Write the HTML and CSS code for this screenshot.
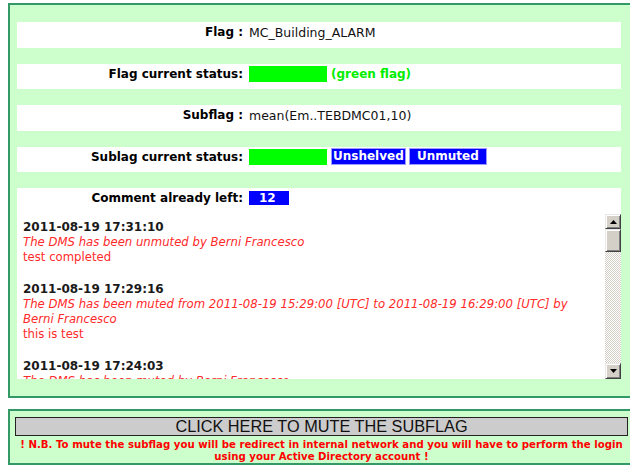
FILE: index.html
```html
<!DOCTYPE html>
<html>
<head>
<meta charset="utf-8">
<title>Subflag details</title>
<link rel="stylesheet" href="styles.css">
</head>
<body>
<div class="panel info">
  <div class="row">
    <div class="label">Flag :</div>
    <div class="value">MC_Building_ALARM</div>
  </div>
  <div class="row">
    <div class="label">Flag current status:</div>
    <div class="value"><span class="lamp"></span><span class="flag-text">(green flag)</span></div>
  </div>
  <div class="row">
    <div class="label">Subflag :</div>
    <div class="value">mean(Em..TEBDMC01,10)</div>
  </div>
  <div class="row">
    <div class="label">Sublag current status:</div>
    <div class="value"><span class="lamp"></span><span class="tag shelve">Unshelved</span><span class="tag mute">Unmuted</span></div>
  </div>
  <div class="comments">
    <div class="comments-head">
      <div class="label">Comment already left:</div>
      <div class="value"><span class="tag count">12</span></div>
    </div>
    <div class="log">
      <div class="log-body">
        <div class="entry">
          <div class="stamp">2011-08-19 17:31:10</div>
          <div class="event">The DMS has been unmuted by Berni Francesco</div>
          <div class="note">test completed</div>
        </div>
        <div class="entry">
          <div class="stamp">2011-08-19 17:29:16</div>
          <div class="event">The DMS has been muted from 2011-08-19 15:29:00 [UTC] to 2011-08-19 16:29:00 [UTC] by Berni Francesco</div>
          <div class="note">this is test</div>
        </div>
        <div class="entry">
          <div class="stamp">2011-08-19 17:24:03</div>
          <div class="event">The DMS has been muted by Berni Francesco</div>
          <div class="note">test</div>
        </div>
      </div>
      <div class="scrollbar">
        <div class="sb-btn sb-up"><svg width="7" height="4" viewBox="0 0 7 4"><polygon points="3.5,0 7,4 0,4"/></svg></div>
        <div class="sb-btn sb-thumb"></div>
        <div class="sb-track"></div>
        <div class="sb-btn sb-down"><svg width="7" height="4" viewBox="0 0 7 4"><polygon points="0,0 7,0 3.5,4"/></svg></div>
      </div>
    </div>
  </div>
</div>
<div class="panel action">
  <button class="mute-btn" type="button">CLICK HERE TO MUTE THE SUBFLAG</button>
  <p class="warning">! N.B. To mute the subflag you will be redirect in internal network and you will have to perform the login using your Active Directory account !</p>
</div>
</body>
</html>
```

FILE: styles.css
```css
html {
  overflow: hidden;
}

body {
  margin: 3px 0 0 8px;
  background: #ffffff;
  font-family: "DejaVu Sans", Verdana, sans-serif;
  color: #000;
}

/* green framed panels */
.panel {
  width: 627px;
  box-sizing: border-box;
  border: 2px solid #339966;
  background: #ccffcc;
}

.info {
  display: flex;
  flex-direction: column;
  gap: 16px;
  padding: 17px 12px 17px 7px;
}

.row {
  width: 604px;
  height: 25.5px;
  box-sizing: border-box;
  padding-top: 2px;
  display: flex;
  align-items: flex-start;
  background: #ffffff;
}

.label {
  width: 226px;
  flex: none;
  text-align: right;
  font-weight: bold;
  font-size: 12px;
  line-height: 16px;
  color: #000;
  white-space: nowrap;
}

.value {
  margin-left: 6px;
  height: 16px;
  display: flex;
  align-items: center;
  font-size: 12.5px;
  color: #111;
  white-space: nowrap;
}

.lamp {
  width: 78px;
  height: 16px;
  background: #00ff00;
  flex: none;
}

.flag-text {
  margin-left: 4px;
  font-weight: bold;
  font-size: 12px;
  color: #00ee00;
}

.tag {
  box-sizing: border-box;
  background: #0000ff;
  border: 1px solid #9a9aff;
  color: #ffffff;
  font-weight: bold;
  font-size: 12px;
  white-space: nowrap;
}

.shelve {
  width: 75px;
  height: 17px;
  line-height: 15px;
  margin-left: 4px;
  padding-left: 1px;
}

.mute {
  width: 78px;
  height: 17px;
  line-height: 15px;
  margin-left: 3px;
  padding-left: 7px;
}

.count {
  width: 40px;
  height: 14px;
  line-height: 13px;
  padding-left: 9px;
  border-color: #0000ff;
}

/* comment history */
.comments {
  width: 604px;
  height: 191px;
  display: flex;
  flex-direction: column;
  background: #ffffff;
}

.comments-head {
  height: 26px;
  flex: none;
  box-sizing: border-box;
  padding-top: 2px;
  display: flex;
  align-items: flex-start;
}

.log {
  flex: 1;
  min-height: 0;
  display: flex;
}

.log-body {
  flex: 1;
  min-width: 0;
  overflow: hidden;
  padding: 6px 10px 0 6px;
  font-size: 11.7px;
  line-height: 15px;
  color: #ff2a2a;
}

.entry {
  margin-bottom: 17px;
}

.stamp {
  font-weight: bold;
  font-size: 12px;
  color: #1a1a1a;
}

.event {
  font-style: italic;
}

/* classic scrollbar */
.scrollbar {
  width: 16px;
  flex: none;
  display: flex;
  flex-direction: column;
}

.sb-btn {
  box-sizing: border-box;
  background: #d4d0c8;
  border: 1px solid;
  border-color: #e8e8e8 #404040 #404040 #e8e8e8;
  box-shadow: inset 1px 1px #ffffff, inset -1px -1px #808080;
  display: flex;
  align-items: center;
  justify-content: center;
  flex: none;
}

.sb-btn svg {
  fill: #000;
}

.sb-up {
  height: 15px;
}

.sb-thumb {
  height: 23px;
}

.sb-down {
  height: 16px;
}

.sb-track {
  flex: 1;
  background: repeating-conic-gradient(#d4d0c8 0 25%, #ffffff 0 50%) 0 0 / 2px 2px;
}

/* mute action */
.action {
  margin-top: 11px;
  padding: 6px 5px 0 5px;
}

.mute-btn {
  display: block;
  width: 613px;
  height: 19px;
  margin: 0;
  padding: 0;
  box-sizing: border-box;
  background: #cccccc;
  border: 1px solid #222222;
  font-family: "Liberation Sans", Arial, sans-serif;
  font-size: 16.3px;
  line-height: 17px;
  color: #111;
  text-align: center;
}

.warning {
  width: 613px;
  margin: 3px 0 0 0;
  font-weight: bold;
  font-size: 10.2px;
  line-height: 12px;
  color: #ff0000;
  text-align: center;
}
```
